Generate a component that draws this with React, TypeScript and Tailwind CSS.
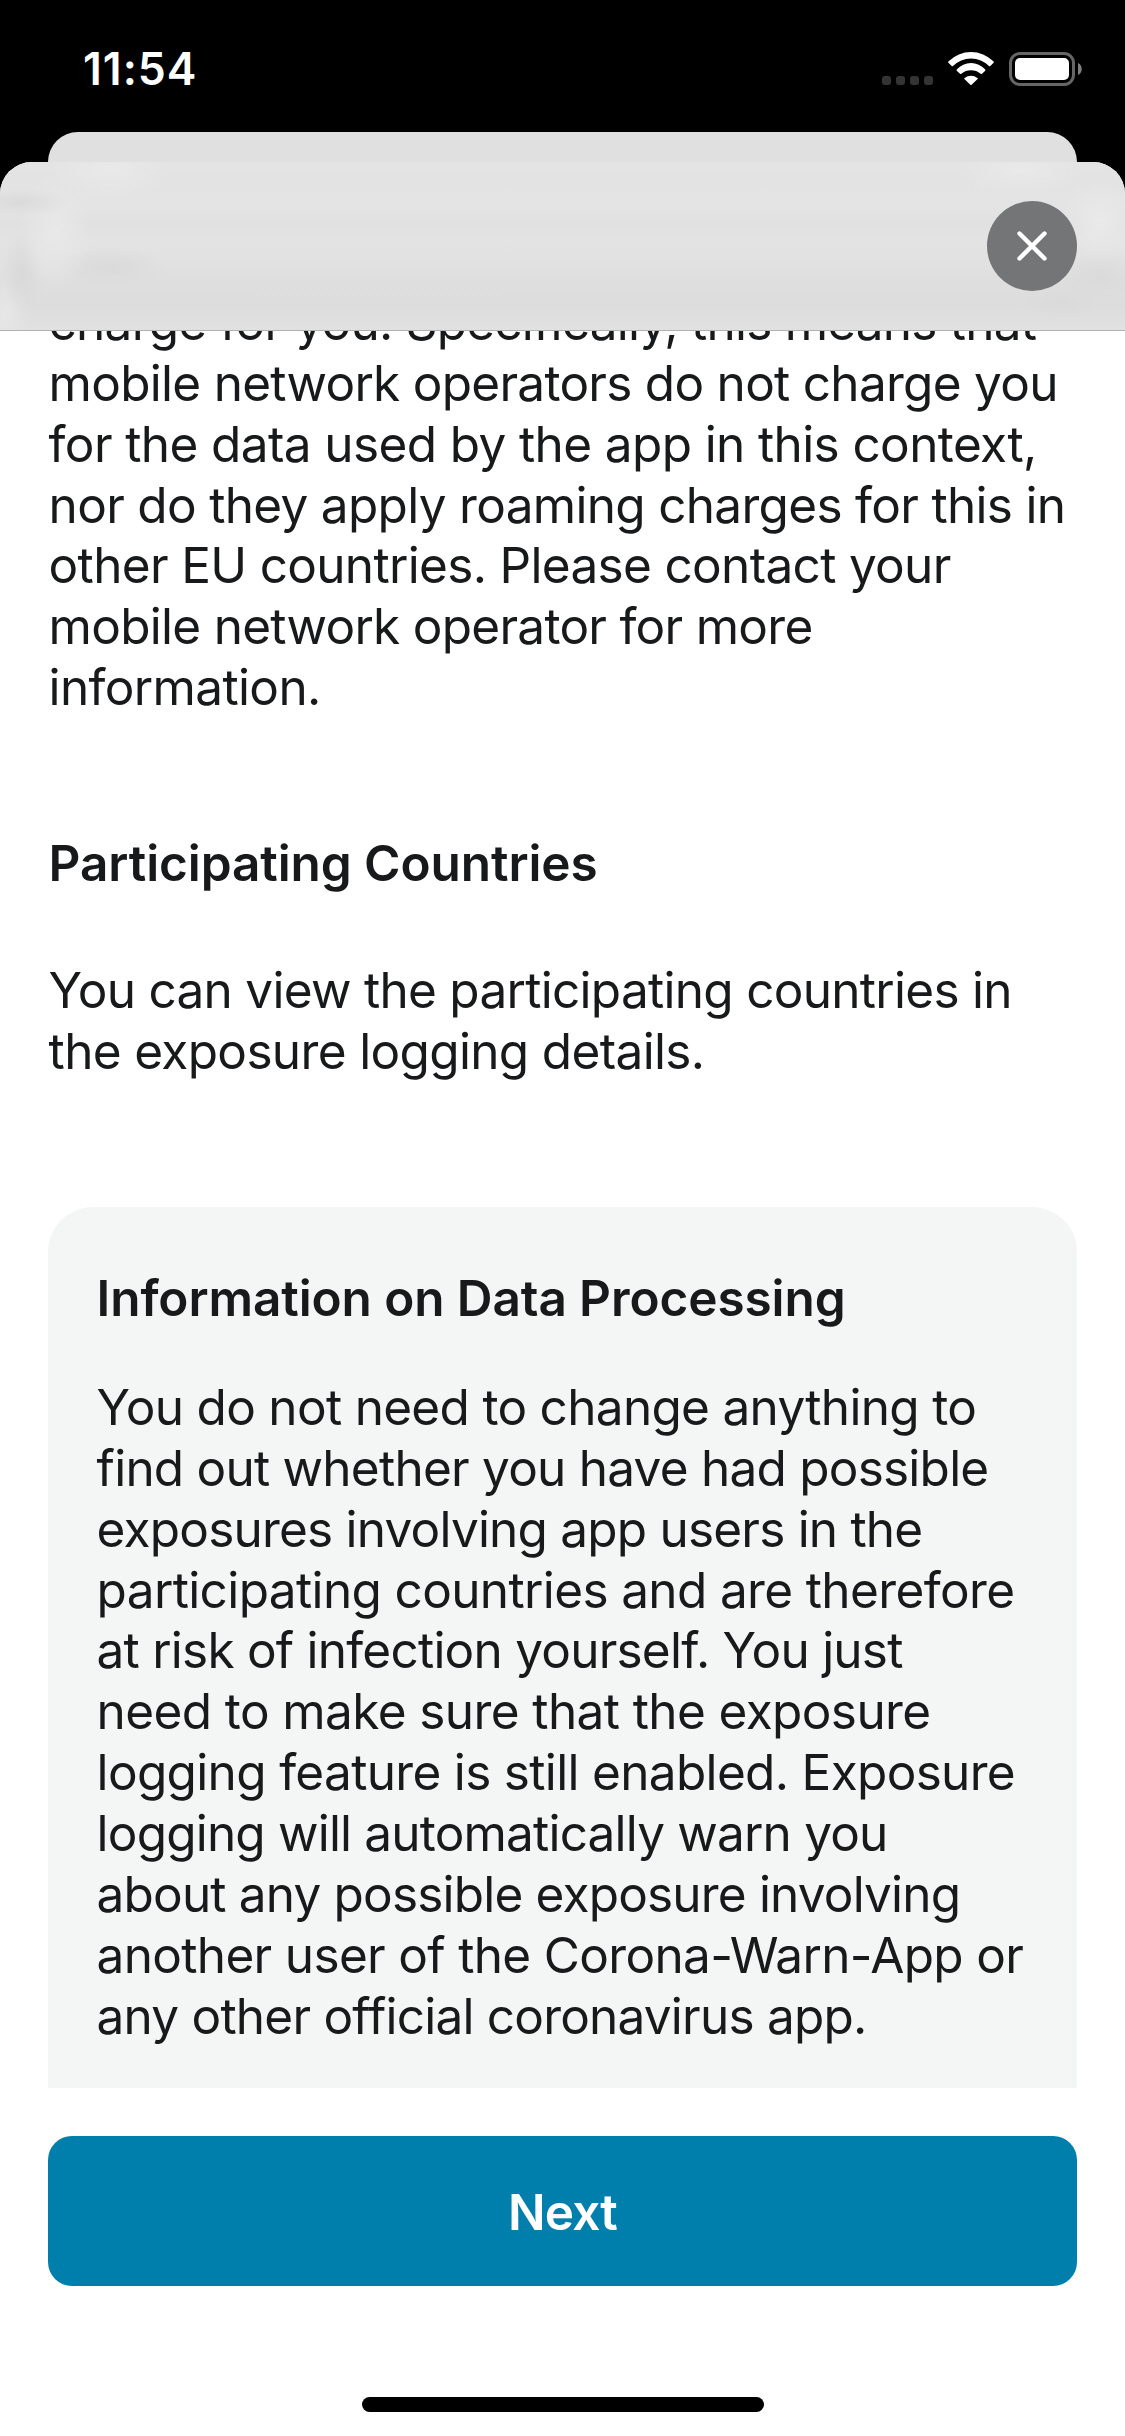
type TextLine = { text: string; tracking: string };

const costs: TextLine[] = [
  { text: "charge for you. Specifically, this means that", tracking: "tracking-[-0.77px]" },
  { text: "mobile network operators do not charge you", tracking: "tracking-[-0.72px]" },
  { text: "for the data used by the app in this context,", tracking: "tracking-[-0.61px]" },
  { text: "nor do they apply roaming charges for this in", tracking: "tracking-[-0.69px]" },
  { text: "other EU countries. Please contact your", tracking: "tracking-[-0.67px]" },
  { text: "mobile network operator for more", tracking: "tracking-[-0.72px]" },
  { text: "information.", tracking: "tracking-[-0.64px]" },
];

const countries: TextLine[] = [
  { text: "You can view the participating countries in", tracking: "tracking-[-0.71px]" },
  { text: "the exposure logging details.", tracking: "tracking-[-0.65px]" },
];

const processing: TextLine[] = [
  { text: "You do not need to change anything to", tracking: "tracking-[-0.69px]" },
  { text: "find out whether you have had possible", tracking: "tracking-[-0.76px]" },
  { text: "exposures involving app users in the", tracking: "tracking-[-0.79px]" },
  { text: "participating countries and are therefore", tracking: "tracking-[-0.63px]" },
  { text: "at risk of infection yourself. You just", tracking: "tracking-[-0.77px]" },
  { text: "need to make sure that the exposure", tracking: "tracking-[-0.6px]" },
  { text: "logging feature is still enabled. Exposure", tracking: "tracking-[-0.67px]" },
  { text: "logging will automatically warn you", tracking: "tracking-[-0.81px]" },
  { text: "about any possible exposure involving", tracking: "tracking-[-0.82px]" },
  { text: "another user of the Corona-Warn-App or", tracking: "tracking-[-0.67px]" },
  { text: "any other official coronavirus app.", tracking: "tracking-[-0.78px]" },
];

function Paragraph({ lines }: { lines: TextLine[] }) {
  return (
    <p className="pl-[0.6px] text-[49.5px] leading-[60.86px] whitespace-nowrap">
      {lines.map((line) => (
        <span key={line.text} className={`block ${line.tracking}`}>
          {line.text}
        </span>
      ))}
    </p>
  );
}

function SignalDots() {
  return (
    <div className="flex gap-[5px] pt-6">
      {[0, 1, 2, 3].map((i) => (
        <span key={i} className="size-[9px] rounded-[3px] bg-[#343434]" />
      ))}
    </div>
  );
}

function WifiIcon() {
  return (
    <svg viewBox="0 0 138 99" className="ml-[15px] h-[33px] w-[46px] fill-white">
      <path d="M2 28 Q-1 31 2 33 L11 42 Q13 44 15 42 A76 76 0 0 1 123 42 Q125 44 127 42 L136 33 Q139 31 136 28 A95 95 0 0 0 2 28Z" />
      <path d="M27 52 Q24 55 27 57 L36 65 Q38 67 40 65 A46 46 0 0 1 98 65 Q100 67 102 65 L111 57 Q114 55 111 52 A56 56 0 0 0 27 52Z" />
      <path d="M50 78 Q47 80 50 82 L67 98 Q69 100 71 98 L88 82 Q91 80 88 78 A29 29 0 0 0 50 78Z" />
    </svg>
  );
}

function BatteryIcon() {
  return (
    <div className="ml-[15px] flex items-center gap-[3px]">
      <div className="h-[34px] w-[66px] rounded-[11px] border-[3px] border-[#666] p-[3px]">
        <div className="h-full w-full rounded-[5px] bg-white" />
      </div>
      <svg viewBox="0 0 4 12" className="h-3 w-1 fill-[#808080]">
        <path d="M0 0 C5 2 5 10 0 12Z" />
      </svg>
    </div>
  );
}

function StatusBar() {
  return (
    <div className="flex h-[132px] shrink-0 items-start justify-between pr-[43px] pl-[83px]">
      <span className="pt-[42px] text-[44.5px] leading-[54px] font-semibold tracking-[1px] text-white">
        11:54
      </span>
      <div className="flex h-[86px] items-start pt-[52px]">
        <SignalDots />
        <WifiIcon />
        <BatteryIcon />
      </div>
    </div>
  );
}

export default function App() {
  return (
    <div className="flex h-[2436px] w-[1125px] flex-col overflow-hidden bg-black font-['Inter',sans-serif] text-[#17191a]">
      <StatusBar />
      <div className="mx-12 h-[30px] shrink-0 rounded-t-[30px] bg-[#e0e0e0]" />

      <div className="flex min-h-0 flex-1 flex-col overflow-hidden rounded-t-[32px] bg-white">
        <header className="flex h-[169px] shrink-0 justify-end border-b border-[#b1b1b1] bg-[radial-gradient(60px_30px_at_110px_8px,#e9e9e9,transparent),radial-gradient(50px_14px_at_20px_40px,#dadada,transparent),radial-gradient(36px_60px_at_55px_70px,#e8e8e8,transparent),radial-gradient(20px_40px_at_22px_110px,#d9d9d9,transparent),radial-gradient(60px_20px_at_110px_105px,#dadada,transparent),radial-gradient(24px_40px_at_5px_150px,#e7e7e7,transparent),radial-gradient(60px_24px_at_1020px_8px,#e9e9e9,transparent),radial-gradient(40px_40px_at_1100px_60px,#eaeaea,transparent),radial-gradient(40px_24px_at_1100px_115px,#dadada,transparent),radial-gradient(40px_18px_at_1060px_140px,#dadada,transparent),linear-gradient(to_bottom,#e4e4e4_0%,#e3e3e3_10%,#e4e4e4_25%,#e1e1e1_36%,#e3e3e3_48%,#e1e1e1_62%,#dedede_72%,#dddddd_86%,#e1e1e1_100%)] pt-[39px] pr-12">
          <button
            aria-label="Close"
            className="flex size-[90px] items-center justify-center rounded-full bg-[#747577]"
          >
            <svg viewBox="0 0 30 30" className="size-[30px] stroke-white stroke-[4.4]">
              <path d="M2.5 2.5 L27.5 27.5 M27.5 2.5 L2.5 27.5" strokeLinecap="round" />
            </svg>
          </button>
        </header>

        <main className="h-[1757px] shrink-0 overflow-hidden px-12">
          <div className="-mt-[39px]">
            <Paragraph lines={costs} />
          </div>
          <h2 className="mt-[115px] pl-[0.6px] text-[49.5px] leading-[61px] font-semibold tracking-[-0.08px]">
            Participating Countries
          </h2>
          <div className="mt-[65.8px]">
            <Paragraph lines={countries} />
          </div>
          <section className="mt-[125.5px] h-[960px] rounded-t-[45px] bg-[#f4f6f5] px-12 pt-[60.6px]">
            <h2 className="pl-[0.6px] text-[49.5px] leading-[61px] font-semibold tracking-[-0.09px]">
              Information on Data Processing
            </h2>
            <div className="mt-[48.4px]">
              <Paragraph lines={processing} />
            </div>
          </section>
        </main>

        <footer className="flex flex-1 flex-col items-center px-12 pt-12">
          <button className="h-[150px] w-full rounded-[24px] bg-[#007fad] pt-0.5 text-[49.5px] leading-[61px] font-semibold tracking-[-0.87px] text-white">
            Next
          </button>
          <div className="mt-[111px] h-[15px] w-[402px] rounded-full bg-black" />
        </footer>
      </div>
    </div>
  );
}
